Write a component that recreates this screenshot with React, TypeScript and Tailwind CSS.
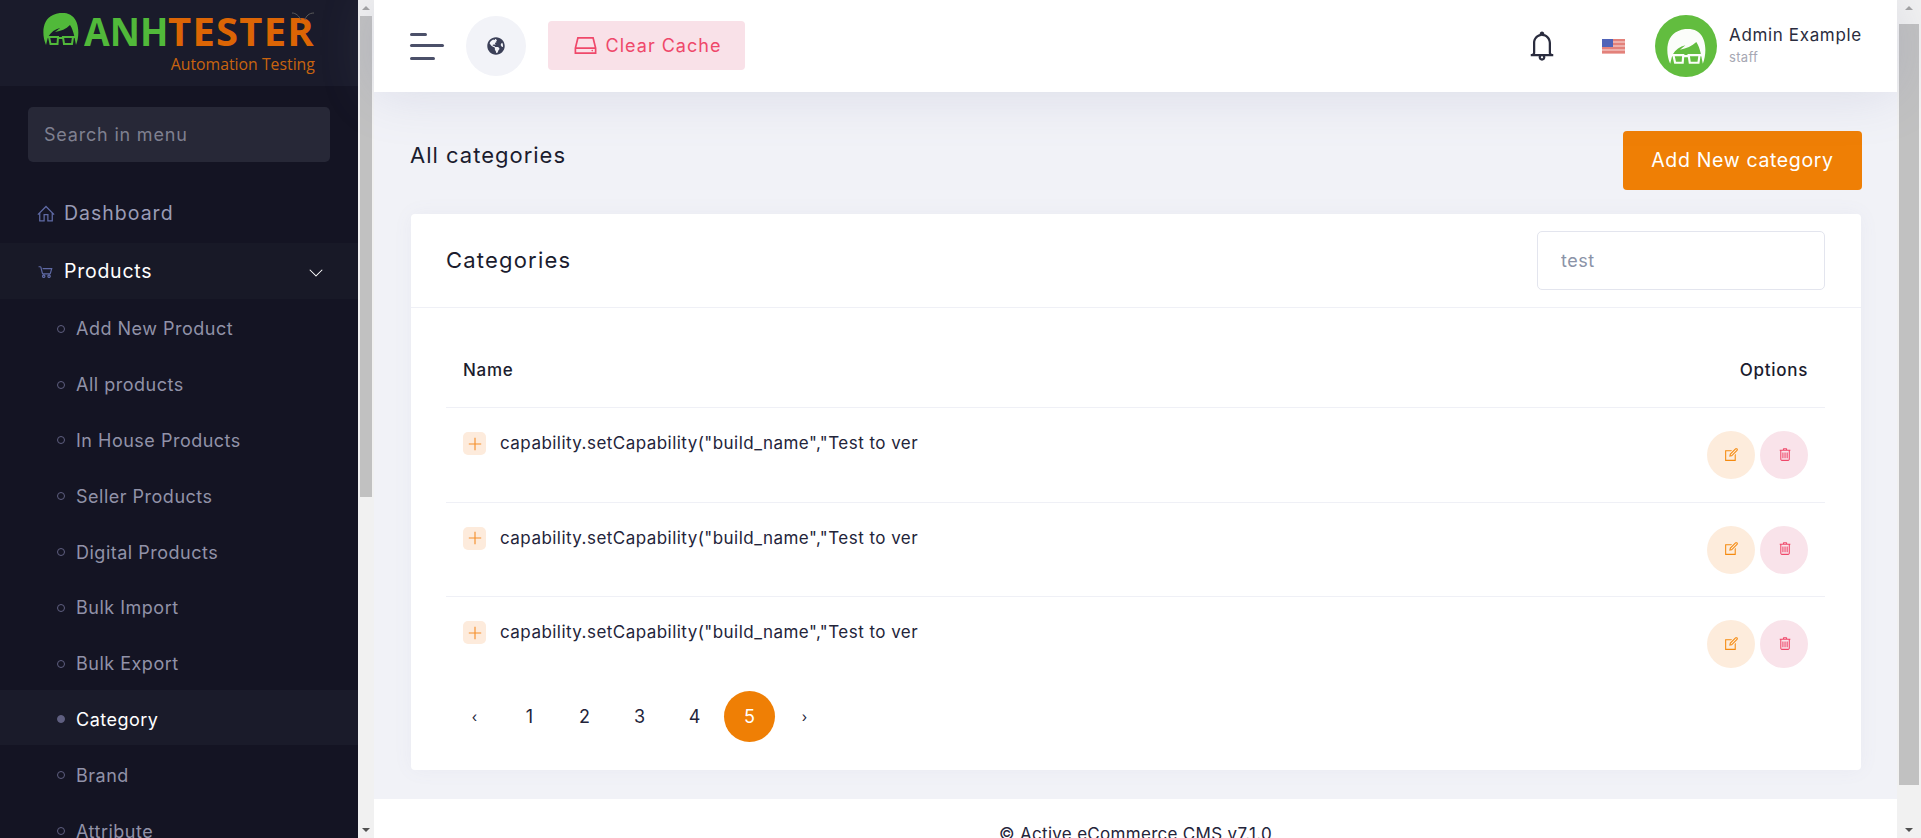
import React from 'react';
import { FaGlobeAmericas } from 'react-icons/fa';
import {
  LiaAngleDownSolid,
  LiaBell,
  LiaEdit,
  LiaHddSolid,
  LiaHomeSolid,
  LiaPlusSolid,
  LiaShoppingCartSolid,
  LiaTrashAltSolid,
} from 'react-icons/lia';

const productLinks = [
  'Add New Product',
  'All products',
  'In House Products',
  'Seller Products',
  'Digital Products',
  'Bulk Import',
  'Bulk Export',
  'Category',
  'Brand',
  'Attribute',
];

const Head: React.FC<{ hair: string; glass: string; className: string }> = ({ hair, glass, className }) => (
  <svg viewBox="0 0 36 34" className={className}>
    <path
      d="M3 32 C-2 20 0 6 10 2 C16 -1 24 -1 29 3 C36 8 37 22 33 32 L31 22 C30 18 29 15 27 12 C23 16 18 18 12 19 L17 15 C12 16 8 19 5 24 Z"
      fill={hair}
    />
    <g fill="none" stroke={glass} strokeWidth="2">
      <path d="M6 24 H15 L14.5 31 H7.5 Z" />
      <path d="M20 24 H30 L29 31 H21 Z" />
      <path d="M15 25 H20 M3 24 H6 M30 24 H33" />
    </g>
  </svg>
);

const Scrollbar: React.FC<{ wide?: boolean; thumb: string }> = ({ wide, thumb }) => (
  <div className={`flex shrink-0 flex-col items-center bg-[#f1f1f1] ${wide ? 'w-[24px]' : 'w-[16px]'}`}>
    <div className="flex h-[16px] shrink-0 items-center justify-center">
      <div className="h-0 w-0 border-x-[4px] border-b-[4px] border-x-transparent border-b-[#a3a3a3]" />
    </div>
    <div className={`bg-[#c1c1c1] ${wide ? 'mt-[8px] w-[20px]' : 'w-[12px]'} ${thumb}`} />
    <div className="mt-auto flex h-[16px] shrink-0 items-center justify-center">
      <div className="h-0 w-0 border-x-[4px] border-t-[4px] border-x-transparent border-t-[#505050]" />
    </div>
  </div>
);

const Sidebar: React.FC = () => (
  <aside className="h-full w-[358px] shrink-0 overflow-hidden bg-[#141423]">
    {/* Logo */}
    <div className="flex h-[86px] justify-center bg-[#1a1b2b]">
      <div className="relative flex flex-col items-end pt-[10px]">
        <div className="flex items-center">
          <Head hair="#51b93a" glass="#51b93a" className="mt-[-2px] mr-[5px] h-[34px] w-[36px]" />
          <span className="w-[79px] origin-left scale-x-[0.93] text-[40px] leading-[42px] font-bold text-[#51b93a] font-['Open_Sans',sans-serif]">
            ANH
          </span>
          <span className="ml-[5px] text-[40px] leading-[42px] font-bold tracking-[1.2px] text-[#dc6505] font-['Open_Sans',sans-serif]">
            TESTER
          </span>
        </div>
        <span className="mt-[2px] text-[15.8px] leading-[20px] text-[#c9640f] font-['Open_Sans',sans-serif]">
          Automation Testing
        </span>
        {/* bug antennae on the R */}
        <svg viewBox="0 0 24 16" className="absolute top-[11px] right-0 h-[16px] w-[24px]" fill="none">
          <path d="M10 9 C8 5 5 2 1 2 M14 9 C15 5 18 2 23 2" stroke="#5a5a5a" strokeWidth="1" />
        </svg>
      </div>
    </div>

    {/* Search */}
    <div className="px-[28px] pt-[21px] pb-[23px]">
      <input
        readOnly
        placeholder="Search in menu"
        className="h-[55px] w-[302px] rounded-[5px] bg-[#272837] px-[16px] text-[18px] tracking-[0.8px] outline-none placeholder:text-[#7f8090]"
      />
    </div>

    {/* Menu */}
    <nav className="text-[#9192a8]">
      <div className="flex h-[58px] items-center pl-[36px] text-[19.5px] tracking-[1px] text-[#9a9cb6]">
        <LiaHomeSolid className="mr-[8px] h-[20px] w-[20px] text-[#5f6aa5]" />
        Dashboard
      </div>
      <div className="flex h-[56px] items-center bg-[#181927] pt-[1px] pr-[34px] pl-[36px] text-[19.5px] tracking-[0.75px] text-white">
        <LiaShoppingCartSolid className="mr-[9px] h-[19px] w-[19px] text-[#5f6aa5]" />
        Products
        <LiaAngleDownSolid className="ml-auto h-[16px] w-[16px]" />
      </div>
      {productLinks.map((link) => {
        const isActive = link === 'Category';
        return (
          <div
            key={link}
            className={`flex h-[55.8px] items-center pl-[57px] text-[18px] tracking-[0.5px] ${isActive ? 'bg-[#1a1b2a] text-white' : ''}`}
          >
            <span
              className={`mt-[4px] mr-[11px] h-[8px] w-[8px] rounded-full border border-[#5f5f80] ${isActive ? 'bg-[#5f5f80]' : ''}`}
            />
            <span className="pt-[4px]">{link}</span>
          </div>
        );
      })}
    </nav>
  </aside>
);

const Header: React.FC = () => (
  <header className="relative flex h-[92px] shrink-0 items-center bg-white pr-[36px] pl-[36px] shadow-[0_0_55px_rgba(120,125,170,0.2)]">
    <div className="flex w-[35px] flex-col">
      <span className="h-[3px] w-[17px] rounded-full bg-[#4b5069]" />
      <span className="mt-[8px] h-[3px] w-[34px] rounded-full bg-[#4b5069]" />
      <span className="mt-[10px] h-[3px] w-[25px] rounded-full bg-[#4b5069]" />
    </div>
    <div className="ml-[21px] flex h-[60px] w-[60px] items-center justify-center rounded-full bg-[#f2f3f8]">
      <FaGlobeAmericas className="h-[18px] w-[18px] text-[#3c4058]" />
    </div>
    <div className="mt-[-1px] ml-[22px] flex h-[49px] w-[197px] items-center justify-center rounded-[4px] bg-[#f9e1e8] text-[18px] tracking-[1px] text-[#ef486a]">
      <LiaHddSolid className="mr-[7px] h-[27px] w-[27px]" />
      Clear Cache
    </div>
    <LiaBell className="ml-auto h-[36px] w-[36px] text-[#2a2c3e]" />
    <svg viewBox="0 0 23 15" className="ml-[42px] h-[15px] w-[23px]">
      <rect width="23" height="15" fill="#eeb0ac" />
      <path d="M0 1 H23 M0 5 H23 M0 9 H23 M0 13 H23" stroke="#e0716a" strokeWidth="1.4" />
      <rect width="11" height="8" fill="#4f63b8" />
    </svg>
    <div className="ml-[30px] flex h-[62px] w-[62px] items-center justify-center rounded-full bg-[#62bd3f]">
      <Head hair="#fbfdfa" glass="#fbfdfa" className="mt-[3px] h-[37px] w-[41px]" />
    </div>
    <div className="ml-[12px] flex w-[132px] flex-col">
      <span className="text-[17px] leading-[22px] tracking-[0.65px] whitespace-nowrap text-[#2a2c3e]">Admin Example</span>
      <span className="text-[13px] leading-[22px] tracking-[0.3px] text-[#a6a7b3]">staff</span>
    </div>
  </header>
);

const CategoryRow: React.FC = () => (
  <div className="flex h-[94.5px] justify-between border-t border-[#eff0f6] pr-[17px] pl-[17px]">
    <div className="flex items-start pt-[24px]">
      <span className="flex h-[23px] w-[23px] items-center justify-center rounded-[5px] bg-[#fdebdc] text-[#f58f2a]">
        <LiaPlusSolid className="h-[18px] w-[18px]" />
      </span>
      <span className="ml-[14px] text-[17px] leading-[23px] tracking-[0.46px] text-[#23243a]">
        capability.setCapability("build_name","Test to ver
      </span>
    </div>
    <div className="flex gap-[5px] pt-[23px]">
      <span className="flex h-[48px] w-[48px] items-center justify-center rounded-full bg-[#fdecdc] text-[#f58a0f]">
        <LiaEdit className="mt-[-2px] h-[17px] w-[17px]" />
      </span>
      <span className="flex h-[48px] w-[48px] items-center justify-center rounded-full bg-[#f9e3ea] text-[#ef486a]">
        <LiaTrashAltSolid className="mt-[-2px] h-[17px] w-[17px]" />
      </span>
    </div>
  </div>
);

const Pagination: React.FC = () => (
  <div className="ml-[3px] flex gap-[4px]">
    {['‹', '1', '2', '3', '4', '5', '›'].map((page) => (
      <span
        key={page}
        className={`flex h-[51px] w-[51px] items-center justify-center rounded-full ${
          page === '5' ? 'bg-[#ef7f05] text-white' : 'text-[#23243a]'
        } ${page === '‹' || page === '›' ? 'text-[14px]' : 'text-[18px]'}`}
      >
        {page}
      </span>
    ))}
  </div>
);

export default function App() {
  return (
    <div className="flex h-[838px] w-[1921px] overflow-hidden bg-[#f1f2f7] font-['Inter',sans-serif]">
      <Sidebar />
      <Scrollbar thumb="h-[481px]" />
      <main className="flex min-w-0 flex-1 flex-col">
        <Header />
        <div className="flex-1 pr-[36px] pl-[37px]">
          <div className="flex items-start justify-between pt-[39px]">
            <h1 className="mt-[9px] ml-[-1px] text-[22px] leading-[30px] tracking-[1px] text-[#1b1c2e]">All categories</h1>
            <button className="mr-[-1px] flex h-[59px] w-[239px] items-center justify-center rounded-[4px] bg-[#ef7f05] text-[19.5px] tracking-[0.65px] text-white">
              Add New category
            </button>
          </div>
          <section className="mt-[24px] h-[556px] rounded-[4px] bg-white shadow-[0_0_20px_rgba(120,125,170,0.06)]">
            <div className="flex h-[94px] items-center justify-between border-b border-[#eff0f6] pr-[36px] pl-[35px]">
              <h2 className="text-[22px] tracking-[1.2px] text-[#1b1c2e]">Categories</h2>
              <input
                readOnly
                placeholder="test"
                className="mt-[-1px] h-[59px] w-[288px] rounded-[5px] border border-[#e3e5ee] px-[23px] text-[18px] tracking-[0.5px] outline-none placeholder:text-[#8b93a7]"
              />
            </div>
            <div className="pt-[35px] pr-[36px] pl-[35px]">
              <div className="flex h-[64px] items-start justify-between px-[17px] pt-[15px] text-[17px] font-medium tracking-[0.7px] text-[#1b1c2e]">
                <span>Name</span>
                <span>Options</span>
              </div>
              <CategoryRow />
              <CategoryRow />
              <CategoryRow />
              <Pagination />
            </div>
          </section>
        </div>
        <footer className="flex h-[39px] shrink-0 justify-center bg-white pt-[24px] text-[17px] leading-[22px] tracking-[0.3px] text-[#23243a]">
          © Active eCommerce CMS v7.1.0
        </footer>
      </main>
      <Scrollbar wide thumb="h-[761px]" />
    </div>
  );
}
